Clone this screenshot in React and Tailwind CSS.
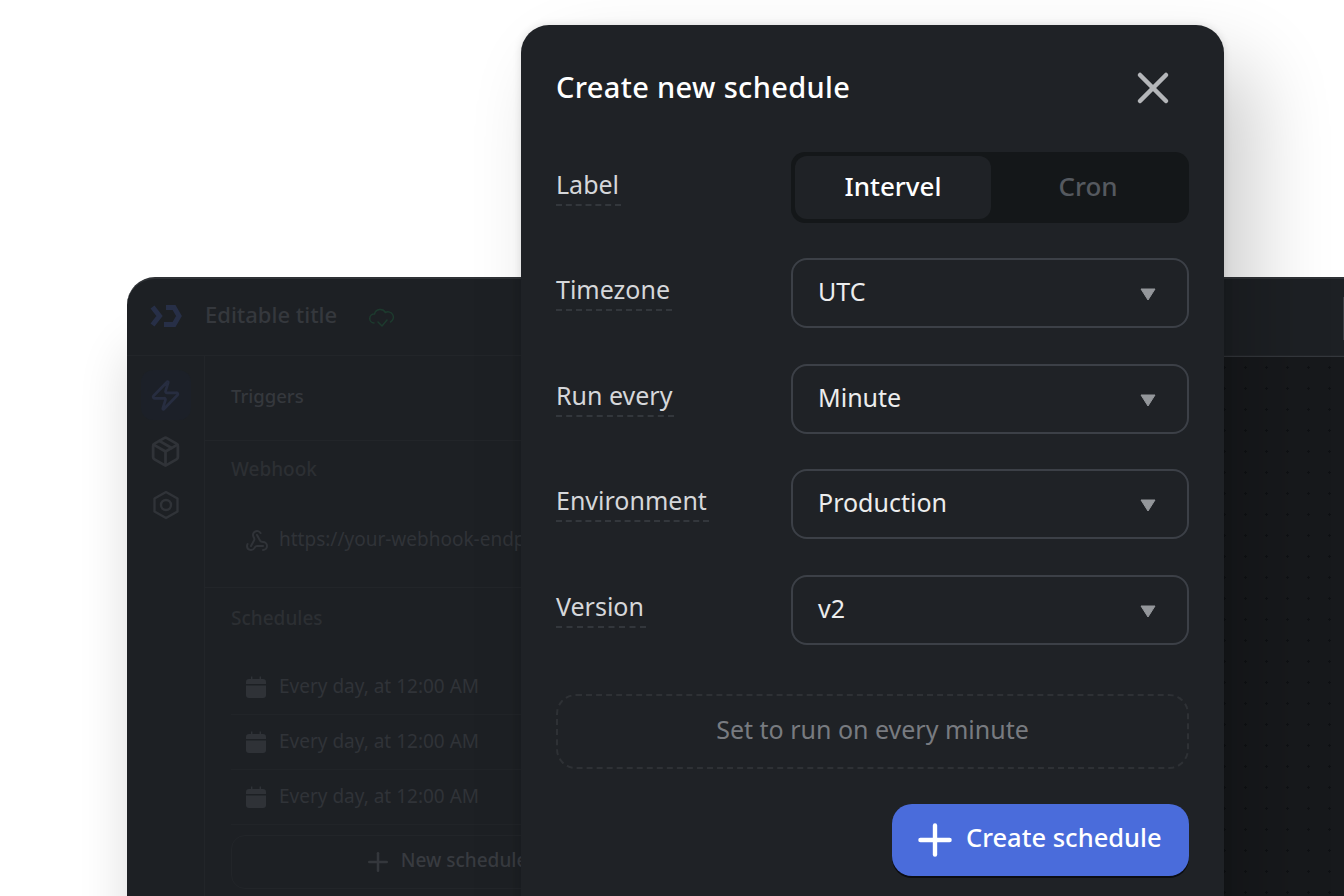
import React from "react";
import { X, Plus, Zap, Package, Webhook } from "lucide-react";

const font = "font-['Noto_Sans',sans-serif]";

function Logo() {
  return (
    <svg width="32" height="22" viewBox="0 0 32 22" fill="none" stroke="#272f47" strokeWidth="5" strokeLinejoin="miter">
      <path d="M2.5 2l7 9-7 9" />
      <path d="M16 2.4h8l5 8.6-5 8.6h-10" />
    </svg>
  );
}

function CloudCheck() {
  return (
    <svg width="26" height="24" viewBox="0 0 26 24" fill="none" stroke="#1d3a2e" strokeWidth="1.5" strokeLinecap="round" strokeLinejoin="round">
      <path d="M5 16a4.5 4.5 0 0 1 .5-9 6 6 0 0 1 11-1.5A5 5 0 0 1 21.5 15" />
      <path d="M9 15l4 4 5-6" />
    </svg>
  );
}

function Gear() {
  return (
    <svg width="28" height="30" viewBox="0 0 28 30" fill="none" stroke="#303338" strokeWidth="2.4" strokeLinejoin="round">
      <path d="M14 2l11.5 6.5v13L14 28 2.5 21.5v-13z" />
      <circle cx="14" cy="15" r="5" />
    </svg>
  );
}

function Cal() {
  return (
    <svg width="20" height="22" viewBox="0 0 20 22" fill="#2f3237">
      <path d="M5 0.5h1.4v2.5h7.2V0.5H15V3h2a3 3 0 0 1 3 3v2H0V6a3 3 0 0 1 3-3h2z" />
      <path d="M0 9.5h20V19a3 3 0 0 1-3 3H3a3 3 0 0 1-3-3z" />
    </svg>
  );
}

function Field({ label, value }) {
  return (
    <div className="flex h-[70px] items-start justify-between">
      <span className="mt-[13px] border-b-2 border-dashed border-[#33373c] pb-[2px] pr-[2px] text-[25px] leading-[36px] text-[#d5d7da]">
        {label}
      </span>
      <div className="flex h-[70px] w-[398px] items-center justify-between rounded-[16px] border-2 border-[#3c4047] pl-[25px] pr-[31px] text-[25px] text-[#eceded]">
        <span className="pb-[2px]">{value}</span>
        <svg className="mt-[3px]" width="16" height="13" viewBox="0 0 16 13" fill="#94979b" stroke="#94979b" strokeLinejoin="round"><path d="M1 1h14L8 12z" /></svg>
      </div>
    </div>
  );
}

function ScheduleRow() {
  return (
    <div className="flex h-[55px] items-center gap-[13px] border-b border-[#212428] pl-[15px] text-[19px] text-[#303338]">
      <Cal />
      <span>Every day, at 12:00 AM</span>
    </div>
  );
}

export default function App() {
  return (
    <div className={`relative h-[896px] w-[1344px] overflow-hidden bg-white ${font}`}>
      {/* back window */}
      <div className="absolute left-[127px] top-[277px] flex h-[700px] w-[1300px] flex-col overflow-hidden rounded-tl-[28px] border-t-2 border-[#2f3236] bg-[#1d2024] shadow-[0_70px_50px_rgba(0,0,0,0.14)]">
        <div className="flex h-[77px] shrink-0 items-center border-b border-[#222529]">
          <div className="mb-[3px] ml-[23px]"><Logo /></div>
          <span className="mb-[6px] ml-[23px] text-[22px] font-medium text-[#35383d]">Editable title</span>
          <div className="ml-[32px] mt-[3px]"><CloudCheck /></div>
        </div>
        <div className="flex flex-1">
          <div className="flex w-[78px] shrink-0 flex-col items-center border-r border-[#222529] pt-[14px]">
            <div className="flex h-[50px] w-[50px] items-center justify-center rounded-[12px] bg-[#1c2028]">
              <Zap size={33} strokeWidth={2} color="#272d40" />
            </div>
            <Package size={33} strokeWidth={2} color="#303338" className="mt-[15px]" />
            <div className="mt-[22px]"><Gear /></div>
          </div>
          <div className="flex w-[400px] shrink-0 flex-col">
            <div className="flex h-[85px] items-center border-b border-[#222529] pb-[4px] pl-[26px] text-[18.5px] font-medium text-[#35383d]">Triggers</div>
            <div className="flex h-[147px] flex-col border-b border-[#222529] pl-[26px]">
              <span className="mt-[14px] text-[19px] font-medium text-[#2c2f33]">Webhook</span>
              <div className="mt-[32px] flex h-[50px] items-center gap-[10px] whitespace-nowrap pl-[14px] text-[19px] text-[#303338]">
                <Webhook size={24} color="#303338" />
                <span className="pb-[2px]">https://your-webhook-endpoint</span>
              </div>
            </div>
            <div className="flex flex-col pl-[26px]">
              <span className="mt-[16px] text-[19px] font-medium text-[#2c2f33]">Schedules</span>
              <div className="mt-[27px] flex flex-col">
                <ScheduleRow />
                <ScheduleRow />
                <ScheduleRow />
              </div>
              <div className="mt-[10px] flex h-[54px] items-center justify-center gap-[8px] rounded-[14px] border border-[#222529] pl-[54px] text-[19px] font-medium text-[#383b40]">
                <Plus size={30} color="#34373c" />
                <span className="whitespace-nowrap pb-[2px]">New schedule</span>
              </div>
            </div>
          </div>
          <div className="flex-1 border-t border-[#34373c] bg-[#17191c] bg-[radial-gradient(#0f1114_1.2px,transparent_1.2px)] bg-[size:21px_21px]" />
        </div>
      </div>
      {/* button edge at the right of the window header */}
      <div className="absolute left-[1343px] top-[297px] h-[43px] w-[1px] bg-[#3a3d42]" />

      {/* modal */}
      <div className="absolute left-[521px] top-[25px] flex h-[950px] w-[703px] flex-col rounded-t-[28px] bg-[#1f2226] px-[35px] shadow-[0_0_8px_rgba(0,0,0,0.12),30px_40px_80px_rgba(0,0,0,0.2)]">
        <div className="mt-[42px] flex h-[42px] items-center justify-between">
          <h2 className="pb-[2px] text-[29px] font-medium tracking-[0.35px] text-white">Create new schedule</h2>
          <X size={52} strokeWidth={2.1} color="#b4b6b9" className="-my-[5px] mr-[10px]" />
        </div>
        <div className="mt-[43px] flex h-[71px] items-start justify-between">
          <span className="mt-[14px] border-b-2 border-dashed border-[#33373c] pb-[2px] pr-[2px] text-[25px] leading-[36px] text-[#d5d7da]">Label</span>
          <div className="flex h-[71px] w-[398px] rounded-[14px] bg-[#141719] p-[4px] text-[26px] font-medium">
            <div className="flex w-[196px] items-center justify-center rounded-[12px] bg-[#1f2226] pb-[2px] text-white">Intervel</div>
            <div className="flex flex-1 items-center justify-center pb-[2px] text-[#55595f]">Cron</div>
          </div>
        </div>
        <div className="mt-[35px] flex flex-col gap-[35.5px]">
          <Field label="Timezone" value="UTC" />
          <Field label="Run every" value="Minute" />
          <Field label="Environment" value="Production" />
          <Field label="Version" value="v2" />
        </div>
        <div className="mt-[49px] flex h-[75px] items-center justify-center rounded-[20px] border-2 border-dashed border-[#2e3135] pb-[2px] text-[25px] text-[#787b80]">
          Set to run on every minute
        </div>
        <div className="mt-[35px] flex justify-end">
          <div className="flex h-[72px] w-[297px] items-center gap-[6px] rounded-[20px] bg-[#4a6cdb] pl-[18px] text-[25.5px] font-medium text-white shadow-[0_2px_0_#0b0d12]">
            <Plus size={50} strokeWidth={2.1} color="#fff" />
            <span className="pb-[4px]">Create schedule</span>
          </div>
        </div>
      </div>
    </div>
  );
}
